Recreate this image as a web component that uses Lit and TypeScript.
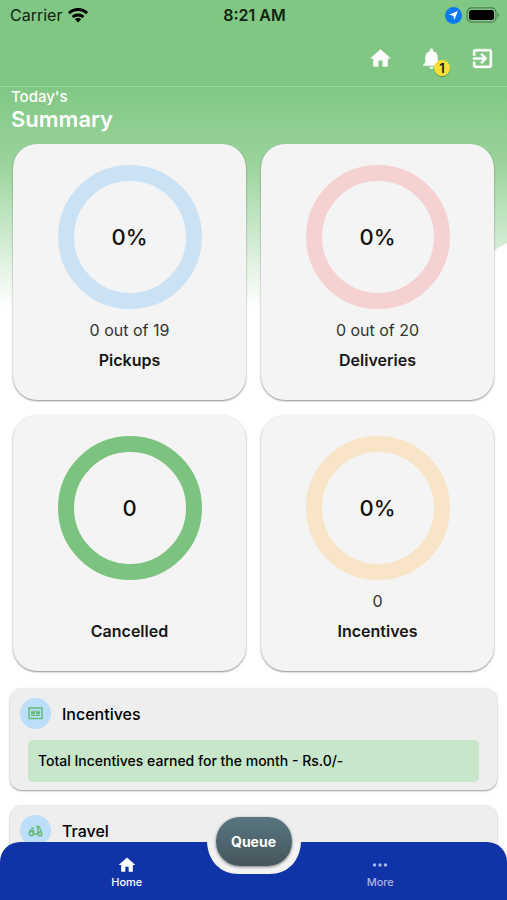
import { LitElement, html, svg, css, nothing } from "lit";
import { customElement, property } from "lit/decorators.js";

const HOME = svg`<path d="M10 20v-6h4v6h5v-8h3L12 3 2 12h3v8z" fill="currentColor"/>`;

interface Metric {
  value: string;
  detail: string;
  label: string;
  color: string;
}

const METRICS: Metric[] = [
  { value: "0%", detail: "0 out of 19", label: "Pickups", color: "#cbe2f4" },
  { value: "0%", detail: "0 out of 20", label: "Deliveries", color: "#f5d1d1" },
  { value: "0", detail: "", label: "Cancelled", color: "#7bc37f" },
  { value: "0%", detail: "0", label: "Incentives", color: "#f8e4c6" },
];

const INCENTIVES_ICON = html`
  <svg width="15" height="13" viewBox="0 0 15 13" fill="none" stroke="currentColor">
    <rect x="1" y="1" width="13" height="10.500" stroke-width="1.500" />
    <path d="M3 4.200h9M3 8.500h9" />
    <path d="M3 6.300h4M8 6.300h4" stroke-width="2.500" />
  </svg>
`;

const TRAVEL_ICON = html`
  <svg width="15" height="12" viewBox="0 0 15 12" fill="none" stroke="currentColor" stroke-width="1.500">
    <circle cx="3.300" cy="8.500" r="2.100" />
    <circle cx="12" cy="9" r="1.800" />
    <path d="M1 5.500h4.500V9H9l1.500-3L9 1.500h2L13.500 7M3 3.300h3" />
  </svg>
`;

@customElement("metric-card")
class MetricCard extends LitElement {
  @property({ attribute: false }) metric!: Metric;

  static styles = css`
    :host {
      display: flex;
      flex-direction: column;
      align-items: center;
      padding: 21px 12px 30px;
      border-radius: 24px;
      background: #f4f4f4;
      box-shadow: 0 1px 2px rgba(0, 0, 0, 0.45);
    }
    .dial {
      display: grid;
      place-items: center;
      width: 144px;
      height: 144px;
      box-sizing: border-box;
      border: 16px solid;
      border-radius: 50%;
    }
    .value {
      font-size: 22px;
      font-weight: 500;
      color: #111;
    }
    .detail {
      height: 20px;
      margin-top: 11px;
      font-size: 16px;
      line-height: 20px;
      color: #333;
    }
    .label {
      margin: 10px 0 0;
      font-size: 16px;
      line-height: 20px;
      font-weight: 600;
      color: #161616;
    }
  `;

  render() {
    const m = this.metric;
    return html`
      <div class="dial" style="border-color: ${m.color}">
        <span class="value">${m.value}</span>
      </div>
      <div class="detail">${m.detail}</div>
      <h2 class="label">${m.label}</h2>
    `;
  }
}

@customElement("app-root")
class AppRoot extends LitElement {
  static styles = css`
    :host {
      display: block;
      position: relative;
      height: 100vh;
      overflow: hidden;
      background: #fff;
      font-family: Inter, "Liberation Sans", sans-serif;
      color: #000;
    }
    * {
      box-sizing: border-box;
    }
    svg {
      display: block;
    }
    button {
      padding: 0;
      border: 0;
      background: none;
      color: inherit;
      font: inherit;
    }
    .top {
      background: #81c784;
      border-bottom: 1px solid #9dd49f;
    }
    .status {
      display: grid;
      grid-template-columns: 1fr auto 1fr;
      align-items: center;
      height: 30px;
      padding: 0 8px 0 10px;
      font-size: 16px;
      color: #10240f;
    }
    .carrier,
    .power {
      display: flex;
      align-items: center;
      gap: 6px;
    }
    .power {
      justify-content: flex-end;
      gap: 4px;
    }
    .clock {
      font-weight: 600;
    }
    .actions {
      display: flex;
      justify-content: flex-end;
      align-items: center;
      gap: 26px;
      height: 56px;
      padding-right: 12px;
      color: #fff;
    }
    .bell {
      position: relative;
    }
    .badge {
      position: absolute;
      left: 15px;
      top: 14px;
      width: 16px;
      height: 16px;
      border-radius: 50%;
      background: #fbe033;
      box-shadow: 0 1px 1px rgba(0, 0, 0, 0.25);
      color: #111;
      font-size: 13px;
      line-height: 16px;
      font-weight: 600;
      text-align: center;
    }
    .backdrop {
      position: absolute;
      left: 0;
      top: 87px;
      width: 100%;
      height: 220px;
    }
    .content {
      position: relative;
    }
    .title {
      margin: 0;
      padding: 0 11px;
      color: #fff;
      font-weight: 600;
      font-size: 22px;
      line-height: 24px;
    }
    .title small {
      display: block;
      font-size: 15px;
      line-height: 20px;
      font-weight: 500;
    }
    .grid {
      display: grid;
      grid-template-columns: 1fr 1fr;
      gap: 15px;
      padding: 13px 13px 17px;
    }
    .panels {
      display: grid;
      gap: 15px;
      padding: 0 10px;
    }
    .panel {
      min-height: 102px;
      padding: 10px 18px 8px;
      border-radius: 12px;
      background: #eee;
      box-shadow: 0 1px 2px rgba(0, 0, 0, 0.4);
    }
    .head {
      display: flex;
      align-items: center;
      gap: 11px;
      margin: 0 0 11px -8px;
      font-size: 16px;
      font-weight: 500;
    }
    .head h2 {
      margin: 0;
      font: inherit;
    }
    .disc {
      display: grid;
      place-items: center;
      width: 31px;
      height: 31px;
      border-radius: 50%;
      background: #bbdefb;
      color: #66bb7a;
    }
    .note {
      margin: 0;
      padding: 11px 10px;
      border-radius: 5px;
      background: #c8e6c9;
      font-size: 14px;
      line-height: 20px;
      font-weight: 500;
    }
    .tabs {
      position: absolute;
      left: 0;
      right: 0;
      bottom: 0;
      display: flex;
      height: 58px;
    }
    .tab {
      flex: 1;
      display: flex;
      flex-direction: column;
      align-items: center;
      padding-top: 13px;
      background: #1033a8;
      font-size: 11px;
      line-height: 14px;
      font-weight: 500;
      text-decoration: none;
      color: #fff;
    }
    .tab.home {
      padding-left: 47px;
      border-radius: 20px 0 0 0;
    }
    .tab.more {
      padding-right: 47px;
      border-radius: 0 20px 0 0;
      color: #a9b5e0;
    }
    .slot {
      position: relative;
      width: 94px;
    }
    .queue {
      position: absolute;
      left: 9px;
      top: -25px;
      width: 76px;
      height: 49px;
      border-radius: 24px;
      background: linear-gradient(#587680, #45555c);
      box-shadow: 0 1px 3px rgba(0, 0, 0, 0.5);
      color: #fff;
      font-size: 14px;
      font-weight: 700;
    }
  `;

  private panel(icon: unknown, title: string, note?: string) {
    return html`
      <section class="panel">
        <div class="head">
          <span class="disc">${icon}</span>
          <h2>${title}</h2>
        </div>
        ${note ? html`<p class="note">${note}</p>` : nothing}
      </section>
    `;
  }

  render() {
    return html`
      <header class="top">
        <div class="status">
          <div class="carrier">
            <span>Carrier</span>
            <svg width="20" height="15" viewBox="0 0 20 15" fill="none" stroke="#000" stroke-width="3">
              <path d="M1 5.200a13 13 0 0 1 18 0M4.600 9a8 8 0 0 1 10.800 0" />
              <path d="M10 14.500 6.800 11.300a4.600 4.600 0 0 1 6.400 0z" fill="#000" stroke="none" />
            </svg>
          </div>
          <span class="clock">8:21 AM</span>
          <div class="power">
            <svg width="17" height="17" viewBox="0 0 17 17">
              <circle cx="8.500" cy="8.500" r="8.500" fill="#0a7aef" />
              <path d="M13 4 9.300 13 8.300 8.800 4 7.800z" fill="#fff" />
            </svg>
            <svg width="33" height="16" viewBox="0 0 33 16">
              <rect x="1" y=".8" width="29" height="14.400" rx="4.500" fill="none" stroke="#4f8052" stroke-width="1.200" />
              <rect x="3" y="3" width="25" height="10" rx="2.500" fill="#000" />
              <path d="M31.500 5.500v5q1.500-1 1.500-2.500t-1.500-2.500" fill="#4f8052" />
            </svg>
          </div>
        </div>
        <div class="actions">
          <button aria-label="Home"><svg width="25" height="25" viewBox="0 0 24 24">${HOME}</svg></button>
          <button class="bell" aria-label="Notifications">
            <svg width="25" height="25" viewBox="0 0 24 24">
              <path d="M12 22c1.100 0 2-.9 2-2h-4c0 1.100.89 2 2 2zm6-6v-5c0-3.070-1.640-5.640-4.500-6.320V4c0-.83-.67-1.500-1.500-1.500s-1.500.67-1.500 1.500v.68C7.630 5.360 6 7.920 6 11v5l-2 2v1h16v-1l-2-2z" fill="currentColor" />
            </svg>
            <span class="badge">1</span>
          </button>
          <button aria-label="Sign out">
            <svg width="25" height="25" viewBox="0 0 24 24">
              <path d="M10.090 15.590 11.500 17l5-5-5-5-1.410 1.410L12.670 11H3v2h9.670l-2.580 2.590zM19 3H5c-1.110 0-2 .9-2 2v4h2V5h14v14H5v-4H3v4c0 1.100.89 2 2 2h14c1.100 0 2-.9 2-2V5c0-1.100-.9-2-2-2z" fill="currentColor" stroke="currentColor" stroke-width=".4" />
            </svg>
          </button>
        </div>
      </header>

      <svg class="backdrop" viewBox="0 0 507 224" preserveAspectRatio="none" aria-hidden="true">
        <defs>
          <linearGradient id="fade" x1="0" y1="0" x2="0" y2="1">
            <stop offset="0" stop-color="#81c784" />
            <stop offset=".35" stop-color="#9bd49d" />
            <stop offset="1" stop-color="#fff" />
          </linearGradient>
        </defs>
        <path d="M0 0H507V159Q490 167 470 188 430 224 370 224H0z" fill="url(#fade)" />
      </svg>

      <main class="content">
        <h1 class="title"><small>Today's</small>Summary</h1>
        <section class="grid">
          ${METRICS.map((m) => html`<metric-card .metric=${m}></metric-card>`)}
        </section>
        <div class="panels">
          ${this.panel(INCENTIVES_ICON, "Incentives", "Total Incentives earned for the month - Rs.0/-")}
          ${this.panel(TRAVEL_ICON, "Travel")}
        </div>
      </main>

      <nav class="tabs">
        <a class="tab home" href="#home">
          <svg width="20" height="20" viewBox="0 0 24 24">${HOME}</svg>
          Home
        </a>
        <div class="slot">
          <svg width="94" height="58" viewBox="0 0 94 58" aria-hidden="true">
            <path d="M0 0H94V58H0z" fill="#1033a8" />
            <path d="M0 0C1 19 13 32 32 32H62C81 32 93 19 94 0z" fill="#f3f3f3" />
          </svg>
          <button class="queue">Queue</button>
        </div>
        <a class="tab more" href="#more">
          <svg width="20" height="20" viewBox="0 0 20 20" fill="currentColor">
            <circle cx="4.500" cy="10" r="1.700" />
            <circle cx="10" cy="10" r="1.700" />
            <circle cx="15.500" cy="10" r="1.700" />
          </svg>
          More
        </a>
      </nav>
    `;
  }
}
